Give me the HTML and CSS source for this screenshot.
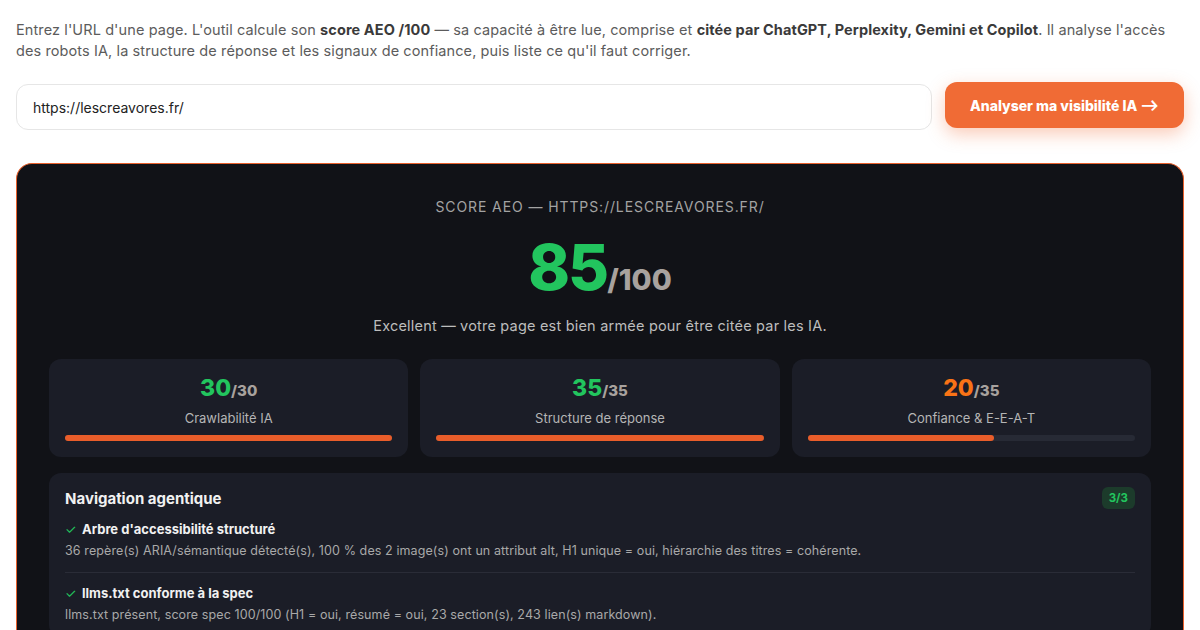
FILE: index.html
```html
<!DOCTYPE html>
<html lang="fr">
<head>
    <meta charset="UTF-8">
    <meta name="viewport" content="width=device-width, initial-scale=1.0">
    <title>Score AEO</title>
    <link rel="stylesheet" href="styles.css">
</head>
<body>
    <p class="intro">Entrez l'URL d'une page. L'outil calcule son <strong>score AEO /100</strong> — sa capacité à être lue, comprise et <strong>citée par ChatGPT, Perplexity, Gemini et Copilot</strong>. Il analyse l'accès des robots IA, la structure de réponse et les signaux de confiance, puis liste ce qu'il faut corriger.</p>

    <form class="scan-form" onsubmit="return false">
        <input type="text" class="url-input" value="https://lescreavores.fr/">
        <button class="scan-btn">Analyser ma visibilité IA ⟶</button>
    </form>

    <div class="report">
        <div class="report-label">Score AEO — https://lescreavores.fr/</div>
        <div class="score"><span class="score-num">85</span><span class="score-max">/100</span></div>
        <p class="verdict">Excellent — votre page est bien armée pour être citée par les IA.</p>

        <div class="pillars">
            <div class="pillar">
                <div class="pillar-score"><span class="ok">30</span><small>/30</small></div>
                <div class="pillar-name">Crawlabilité IA</div>
                <div class="bar"><div class="bar-fill" style="width: 100%"></div></div>
            </div>
            <div class="pillar">
                <div class="pillar-score"><span class="ok">35</span><small>/35</small></div>
                <div class="pillar-name">Structure de réponse</div>
                <div class="bar"><div class="bar-fill" style="width: 100%"></div></div>
            </div>
            <div class="pillar">
                <div class="pillar-score"><span class="warn">20</span><small>/35</small></div>
                <div class="pillar-name">Confiance &amp; E-E-A-T</div>
                <div class="bar"><div class="bar-fill" style="width: 57%"></div></div>
            </div>
        </div>

        <div class="group">
            <div class="group-head">
                <h3>Navigation agentique</h3>
                <span class="badge">3/3</span>
            </div>
            <div class="check">
                <div class="check-title"><span class="tick">✓</span>Arbre d'accessibilité structuré</div>
                <div class="check-desc">36 repère(s) ARIA/sémantique détecté(s), 100 % des 2 image(s) ont un attribut alt, H1 unique = oui, hiérarchie des titres = cohérente.</div>
            </div>
            <div class="check">
                <div class="check-title"><span class="tick">✓</span>llms.txt conforme à la spec</div>
                <div class="check-desc">llms.txt présent, score spec 100/100 (H1 = oui, résumé = oui, 23 section(s), 243 lien(s) markdown).</div>
            </div>
        </div>
    </div>
</body>
</html>
```

FILE: styles.css
```css
body {
    margin: 0;
    padding: 0 16px;
    font-family: Inter, "Noto Sans", sans-serif;
    background-color: #fff;
    color: #5a5a5a;
}
.intro {
    margin: 19px 0 0;
    font-size: 14.5px;
    line-height: 21px;
    letter-spacing: 0.1px;
    color: #5c5c5c;
}
.intro strong {
    color: #3a3a3a;
    font-weight: 700;
}
.scan-form {
    display: flex;
    gap: 13px;
    margin-top: 21px;
    align-items: flex-start;
}
.url-input {
    flex: 1;
    height: 46px;
    box-sizing: border-box;
    margin-top: 2px;
    padding: 0 16px;
    border: 1px solid #e6e6e6;
    border-radius: 12px;
    font-family: inherit;
    font-size: 14px;
    color: #222;
    outline: none;
}
.scan-btn {
    width: 239px;
    height: 46px;
    border: none;
    border-radius: 12px;
    background-color: #f06b35; /* brand orange */
    color: #fff;
    font-family: inherit;
    font-size: 14px;
    font-weight: 800;
    cursor: pointer;
    box-shadow: 0 6px 18px rgba(240, 107, 53, 0.35);
}
/* Dark report panel, runs on below the fold */
.report {
    margin-top: 33px;
    padding: 34px 32px 0;
    height: 468px;
    box-sizing: border-box;
    background-color: #111217;
    border: 1px solid #e8602c;
    border-bottom: 0;
    border-radius: 16px 16px 0 0;
    text-align: center;
    overflow: hidden;
}
.report-label {
    font-size: 14px;
    letter-spacing: 0.9px;
    text-transform: uppercase;
    color: #a3a3a3;
}
.score {
    margin-top: 21px;
    line-height: 1;
}
.score-num {
    font-size: 63px;
    font-weight: 800;
    letter-spacing: -2px;
    color: #22c55e;
}
.score-max {
    font-size: 29px;
    font-weight: 800;
    color: #a8a29e;
}
.verdict {
    margin: 18px 0 0;
    font-size: 14.5px;
    letter-spacing: 0.2px;
    color: #bdbdbd;
}
.pillars {
    display: grid;
    grid-template-columns: repeat(3, 1fr);
    gap: 12px;
    margin-top: 25px;
}
.pillar {
    padding: 14px 16px 16px;
    background-color: #1b1d27;
    border-radius: 12px;
}
.pillar-score {
    font-size: 23px;
    font-weight: 800;
    line-height: 30px;
}
.pillar-score small {
    font-size: 15px;
    color: #a8a29e;
}
.ok { color: #22c55e; }
.warn { color: #f97316; }
.pillar-name {
    margin-top: 4px;
    font-size: 13px;
    color: #b5b5b5;
}
.bar {
    height: 6px;
    margin-top: 9px;
    background-color: #272a35;
    border-radius: 3px;
}
.bar-fill {
    height: 100%;
    background-color: #e95d2a;
    border-radius: 3px;
}
.group {
    margin-top: 16px;
    padding: 14px 16px 0;
    background-color: #1b1d27;
    border-radius: 12px;
    text-align: left;
}
.group-head {
    display: flex;
    justify-content: space-between;
    align-items: center;
}
.group-head h3 {
    margin: 0;
    font-size: 15px;
    font-weight: 700;
    color: #f1f1f1;
}
.badge {
    padding: 4px 7px;
    background-color: #1c3b2b;
    border-radius: 6px;
    font-size: 11.5px;
    font-weight: 700;
    color: #22c55e;
}
.check {
    padding: 12px 0 14px;
    border-bottom: 1px solid #2a2c37;
}
.check + .check {
    padding-top: 12px;
}
.check-title {
    font-size: 13px;
    font-weight: 700;
    color: #f1f1f1;
}
.tick {
    display: inline-block;
    width: 17px;
    color: #22c55e;
    font-weight: 400;
}
.check-desc {
    margin-top: 6px;
    font-size: 12.5px;
    letter-spacing: 0.1px;
    color: #a9a9a9;
}
```
